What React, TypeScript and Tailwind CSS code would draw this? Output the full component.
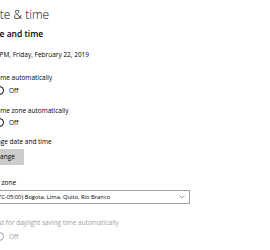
export default function App() {
  return (
    <div
      className="w-[270px] h-[250px] overflow-hidden bg-white text-black"
      style={{ fontFamily: '"Open Sans", "Noto Sans", sans-serif' }}
    >
      <div className="-ml-[15px] pt-[7px] flex flex-col items-start">
        <h1 className="text-[12px] font-light leading-[16px]">Date &amp; time</h1>

        <h2 className="mt-[5px] text-[8.5px] font-semibold leading-[12px]">Date and time</h2>

        <p className="mt-[10px] text-[6.5px] leading-[9px]">3:31 PM, Friday, February 22, 2019</p>

        <p className="mt-[13.5px] text-[6.5px] leading-[9px]">Set time automatically</p>
        <Toggle className="mt-[3.5px]" />

        <p className="mt-[10.5px] text-[6.5px] leading-[9px]">Set time zone automatically</p>
        <Toggle className="mt-[3px]" />

        <p className="mt-[9.5px] text-[6.5px] leading-[9px]">Change date and time</p>
        <button className="mt-[3px] h-[16px] w-[39px] bg-[#cccccc] pl-[7px] text-[6.5px] leading-[16px] text-left">
          Change
        </button>

        <p className="mt-[13px] text-[6.5px] leading-[9px]">Time zone</p>
        <div className="mt-[3px] w-[205px] h-[14px] border border-[#a0a0a0] flex items-center justify-between pl-[6px] pr-[4px]">
          <span className="text-[5.8px] leading-[9px]">(UTC-05:00) Bogota, Lima, Quito, Rio Branco</span>
          <svg width="6" height="4" viewBox="0 0 6 4" fill="none">
            <path d="M0.5 0.5 L3 3 L5.5 0.5" stroke="#8a8a8a" strokeWidth="0.8" />
          </svg>
        </div>

        <p className="mt-[14px] text-[6.5px] leading-[9px] text-[#a0a0a0]">
          Adjust for daylight saving time automatically
        </p>
        <Toggle className="mt-[4px]" disabled />
      </div>
    </div>
  );
}

function Toggle({ className = "", disabled = false }: { className?: string; disabled?: boolean }) {
  const c = disabled ? "#a0a0a0" : "#000000";
  return (
    <div className={`flex items-center gap-[5px] h-[10px] ${className}`}>
      <div
        className="w-[19px] h-[9px] rounded-full border flex items-center pl-[2px]"
        style={{ borderColor: c }}
      >
        <div className="w-[4px] h-[4px] rounded-full" style={{ backgroundColor: c }} />
      </div>
      <span className="text-[6.5px] leading-[9px]" style={{ color: c }}>
        Off
      </span>
    </div>
  );
}
